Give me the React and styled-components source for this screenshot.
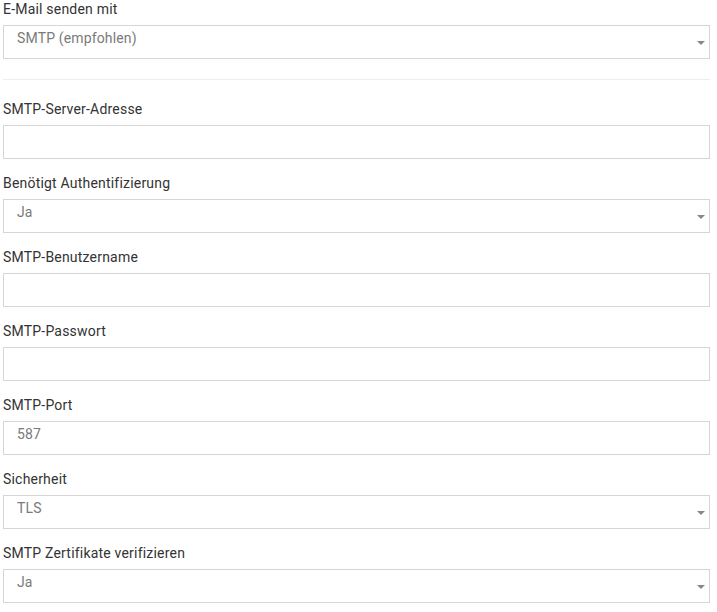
import React from "react";
import styled, { createGlobalStyle } from "styled-components";

const Global = createGlobalStyle`
  html, body { margin: 0; padding: 0; background: #fff; }
  body { font-family: Roboto, "Noto Sans", sans-serif; }
`;

const Form = styled.div`
  width: 707px;
  padding: 0 0 0 3px;
  display: flex;
  flex-direction: column;
`;

const Group = styled.div`
  display: flex;
  flex-direction: column;
  gap: 7px;
  margin-bottom: 15px;
`;

const Label = styled.label`
  font-size: 14px;
  line-height: 18px;
  letter-spacing: 0.2px;
  color: #333;
`;

const Box = styled.div`
  position: relative;
  box-sizing: border-box;
  height: 34px;
  border: 1px solid #d6d6d6;
  padding: 1.5px 13px;
  font-size: 14px;
  line-height: 20px;
  letter-spacing: 0.15px;
  color: #7a7a7a;
  background: #fff;
`;

const Arrow = styled.span`
  position: absolute;
  right: 4px;
  top: 15px;
  width: 0;
  height: 0;
  border-left: 4px solid transparent;
  border-right: 4px solid transparent;
  border-top: 4px solid #888;
`;

const Divider = styled.hr`
  border: 0;
  border-top: 1px solid #eee;
  margin: 5px 0 20px;
  width: 707px;
`;

function Field({ label, value, select }) {
  return (
    <Group>
      <Label>{label}</Label>
      <Box>
        {value}
        {select && <Arrow />}
      </Box>
    </Group>
  );
}

export default function App() {
  return (
    <>
      <Global />
      <Form>
        <Field label="E-Mail senden mit" value="SMTP (empfohlen)" select />
        <Divider />
        <Field label="SMTP-Server-Adresse" value="" />
        <Field label="Benötigt Authentifizierung" value="Ja" select />
        <Field label="SMTP-Benutzername" value="" />
        <Field label="SMTP-Passwort" value="" />
        <Field label="SMTP-Port" value="587" />
        <Field label="Sicherheit" value="TLS" select />
        <Field label="SMTP Zertifikate verifizieren" value="Ja" select />
      </Form>
    </>
  );
}
